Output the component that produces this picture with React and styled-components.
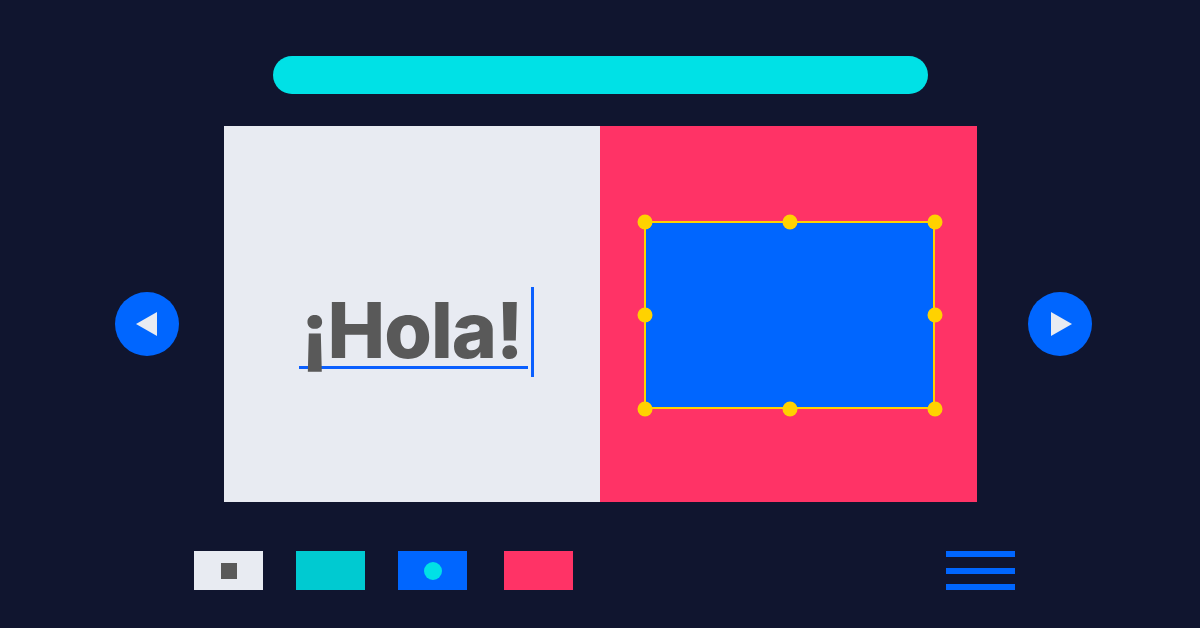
import React from "react";
import styled, { createGlobalStyle } from "styled-components";

const GlobalStyle = createGlobalStyle`
  html, body {
    margin: 0;
    padding: 0;
    background: #10152f;
  }
  body {
    font-family: "Inter", "Liberation Sans", sans-serif;
  }
`;

const Page = styled.div`
  width: 1200px;
  height: 628px;
  overflow: hidden;
  display: flex;
  flex-direction: column;
  background: #10152f;
`;

const TopBar = styled.div`
  margin: 56px 0 0 273px;
  width: 655px;
  height: 38px;
  border-radius: 19px;
  background: #00e1e6;
`;

const Stage = styled.div`
  margin-top: 32px;
  display: flex;
  align-items: flex-start;
  padding-left: 115px;
`;

const ArrowButton = styled.div`
  width: 64px;
  height: 64px;
  border-radius: 50%;
  background: #0066ff;
  display: flex;
  align-items: center;
  justify-content: center;
  margin-top: 166px;
  margin-left: ${(p) => (p.$right ? "51px" : "0")};
  margin-right: ${(p) => (p.$right ? "0" : "45px")};
`;

const Canvas = styled.div`
  width: 753px;
  height: 376px;
  display: flex;
`;

const TextPanel = styled.div`
  width: 376px;
  background: #e8ebf2;
  display: flex;
  align-items: flex-start;
  padding: 161px 0 0 75px;
  box-sizing: border-box;
`;

const TextField = styled.div`
  width: 227px;
  height: 74px;
  border-bottom: 3px solid #0a5fff;
  padding: 5px 0 0 2px;
  box-sizing: content-box;
  display: flex;
  align-items: flex-start;
  overflow: visible;
`;

const Word = styled.span`
  font-family: "Inter", "Liberation Sans", sans-serif;
  font-weight: 800;
  font-size: 77px;
  line-height: 76px;
  color: #595959;
  letter-spacing: -1px;
  white-space: nowrap;
`;

const Caret = styled.div`
  width: 3px;
  height: 90px;
  margin-left: 3px;
  background: #0a5fff;
`;

const ShapePanel = styled.div`
  flex: 1;
  background: #ff3366;
  display: flex;
  padding: 95px 42px 93px 44px;
`;

const Selection = styled.div`
  position: relative;
  flex: 1;
  background: #0066ff;
  border: 2px solid #ffd200;
`;

const HandleLayer = styled.div`
  position: absolute;
  inset: -1.5px;
`;

const Handle = styled.span`
  position: absolute;
  width: 15px;
  height: 15px;
  border-radius: 50%;
  background: #ffd200;
  left: ${(p) => p.$x};
  top: ${(p) => p.$y};
  transform: translate(-50%, -50%);
`;

const Toolbar = styled.div`
  margin-top: 49px;
  display: flex;
  align-items: center;
  padding-left: 194px;
`;

const Swatch = styled.div`
  width: 69px;
  height: 39px;
  margin-right: ${(p) => p.$gap || "33px"};
  background: ${(p) => p.$color};
  display: flex;
  align-items: center;
  justify-content: center;
`;

const Square = styled.div`
  width: 16px;
  height: 16px;
  background: #595959;
`;

const Dot = styled.div`
  width: 18px;
  height: 18px;
  border-radius: 50%;
  background: #00e1e6;
`;

const Menu = styled.div`
  margin-left: 373px;
  width: 69px;
  height: 39px;
  display: flex;
  flex-direction: column;
  justify-content: space-between;
`;

const MenuLine = styled.div`
  height: 6px;
  background: #0066ff;
`;

const handles = [
  ["0%", "0%"],
  ["50%", "0%"],
  ["100%", "0%"],
  ["0%", "50%"],
  ["100%", "50%"],
  ["0%", "100%"],
  ["50%", "100%"],
  ["100%", "100%"],
];

export default function App() {
  return (
    <Page>
      <GlobalStyle />
      <TopBar />
      <Stage>
        <ArrowButton>
          <svg width="24" height="28" viewBox="0 0 24 28">
            <path d="M1 14 L22 2 L22 26 Z" fill="#e8ebf2" />
          </svg>
        </ArrowButton>
        <Canvas>
          <TextPanel>
            <TextField>
              <Word>¡Hola!</Word>
            </TextField>
            <Caret />
          </TextPanel>
          <ShapePanel>
            <Selection>
              <HandleLayer>
                {handles.map(([x, y]) => (
                  <Handle key={x + y} $x={x} $y={y} />
                ))}
              </HandleLayer>
            </Selection>
          </ShapePanel>
        </Canvas>
        <ArrowButton $right>
          <svg width="24" height="28" viewBox="0 0 24 28">
            <path d="M3 2 L24 14 L3 26 Z" fill="#e8ebf2" />
          </svg>
        </ArrowButton>
      </Stage>
      <Toolbar>
        <Swatch $color="#e8ebf2">
          <Square />
        </Swatch>
        <Swatch $color="#00cad1" />
        <Swatch $color="#0066ff" $gap="37px">
          <Dot />
        </Swatch>
        <Swatch $color="#ff3366" $gap="0" />
        <Menu>
          <MenuLine />
          <MenuLine />
          <MenuLine />
        </Menu>
      </Toolbar>
    </Page>
  );
}
